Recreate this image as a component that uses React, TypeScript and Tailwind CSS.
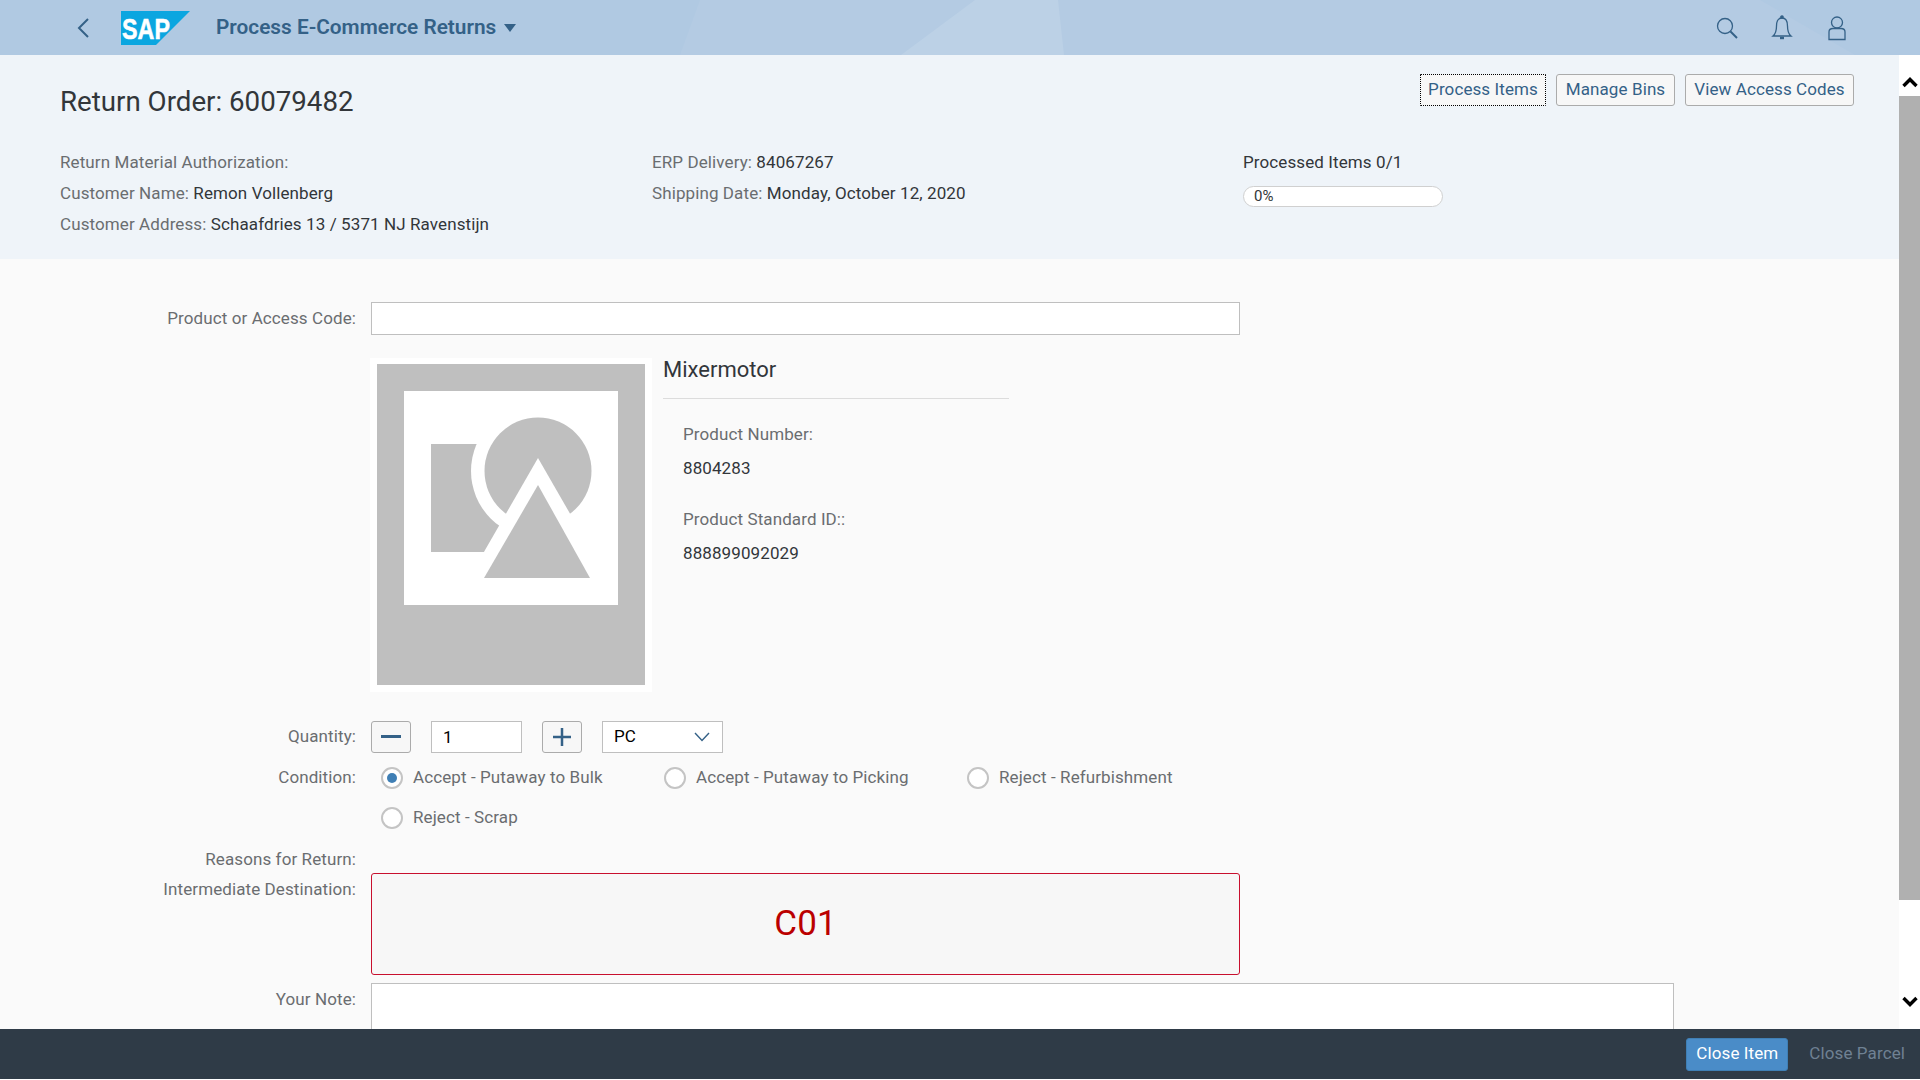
import React from 'react';

const Field = ({ label, value }: { label: string; value?: string }) => (
  <div className="h-[31px] leading-[31px] whitespace-nowrap">
    <span className="text-[#6a6d70]">{label}</span>
    {value && <span className="text-[#32363a]"> {value}</span>}
  </div>
);

const Radio = ({ label, checked, className }: { label: string; checked?: boolean; className: string }) => (
  <div className={`flex items-center h-6 ${className}`}>
    <span className="w-[22px] h-[22px] rounded-full border-2 border-[#c4c4c4] bg-white flex items-center justify-center shrink-0">
      {checked && <span className="w-[10px] h-[10px] rounded-full bg-[#3f7fb5]" />}
    </span>
    <span className="ml-[10px] text-[#6a6d70] whitespace-nowrap">{label}</span>
  </div>
);

const Label = ({ children, className = '' }: { children: React.ReactNode; className?: string }) => (
  <div className={`w-[356px] text-right text-[#6a6d70] whitespace-nowrap shrink-0 ${className}`}>{children}</div>
);

const HeaderButton = ({ children, width, focused }: { children: React.ReactNode; width: string; focused?: boolean }) => (
  <button
    className={`h-[32px] bg-[#f7f7f7] text-[#346187] whitespace-nowrap ${width} ${
      focused ? 'border border-dotted border-black rounded-[1px]' : 'border border-[#ababab] rounded-[3px]'
    }`}
  >
    {children}
  </button>
);

const StepButton = ({ children }: { children: React.ReactNode }) => (
  <button className="w-[40px] h-[32px] bg-[#f7f7f7] border border-[#ababab] rounded-[3px] flex items-center justify-center">
    {children}
  </button>
);

export default function App() {
  return (
    <div
      className="h-[1079px] w-[1920px] flex flex-col overflow-hidden text-[17px] tracking-[0.1px] bg-white"
      style={{ fontFamily: 'Roboto, "Liberation Sans", sans-serif' }}
    >
      {/* shell bar */}
      <header className="relative h-[55px] shrink-0 bg-[#b4cbe3] flex items-center">
        <svg className="absolute inset-0" width="1920" height="55" viewBox="0 0 1920 55">
          <polygon points="0,0 700,0 680,55 0,55" fill="#b0c9e2" />
          <polygon points="975,0 1058,0 1064,55 901,55" fill="#bcd1e6" />
          <polygon points="1760,0 1920,0 1920,55 1855,55" fill="#b0c9e2" />
        </svg>
        <svg className="relative ml-[75px]" width="16" height="24" viewBox="0 0 16 24" fill="none">
          <path d="M13 3 L4 12 L13 21" stroke="#346187" strokeWidth="2" />
        </svg>
        <svg className="relative ml-[30px]" width="69" height="34" viewBox="0 0 69 34">
          <polygon points="0,0 69,0 35,34 0,34" fill="#0ba6e0" />
          <text x="1" y="28" fontSize="30" fontWeight="700" fill="#fff" stroke="#fff" strokeWidth="0.6" textLength="48" lengthAdjust="spacingAndGlyphs" fontFamily="Liberation Sans, sans-serif">
            SAP
          </text>
        </svg>
        <div className="relative ml-[26px] text-[20.8px] font-semibold text-[#346187] whitespace-nowrap tracking-normal">
          Process E-Commerce Returns
        </div>
        <svg className="relative ml-[8px]" width="12" height="8" viewBox="0 0 12 8">
          <polygon points="0,0 12,0 6,8" fill="#346187" />
        </svg>
        <div className="relative ml-auto mr-[71px] flex items-center gap-[31px] text-[#346187]">
          <svg width="24" height="24" viewBox="0 0 24 24" fill="none" stroke="#346187">
            <circle cx="10" cy="10" r="7.5" strokeWidth="1.3" />
            <path d="M15.5 15.5 L22 22" strokeWidth="2" />
          </svg>
          <svg width="24" height="26" viewBox="0 0 24 26" fill="none" stroke="#346187" strokeWidth="1.3">
            <path d="M12 3 C7.5 3 6.5 7 6.5 11 C6.5 16 5.5 19 3 21 H21 C18.5 19 17.5 16 17.5 11 C17.5 7 16.5 3 12 3 Z" />
            <circle cx="12" cy="2" r="1.2" fill="#346187" />
            <path d="M10 23 H14" strokeWidth="2.4" />
          </svg>
          <svg width="24" height="26" viewBox="0 0 24 26" fill="none" stroke="#346187" strokeWidth="1.3">
            <circle cx="12" cy="7.5" r="5.5" />
            <path d="M4 24.5 V17 C4 14.5 6 13.5 8 13.5 H16 C18 13.5 20 14.5 20 17 V24.5 Z" />
          </svg>
        </div>
      </header>

      <div className="flex-1 flex min-h-0">
        <main className="flex-1 min-w-0 overflow-hidden bg-[#fafafa]">
          {/* object header */}
          <section className="h-[204px] bg-[#eff4f9] pl-[60px] pr-[45px]">
            <div className="h-[92px] flex items-start justify-between">
              <h1 className="mt-[31px] text-[27.7px] leading-[32px] tracking-normal text-[#32363a] whitespace-nowrap">Return Order: 60079482</h1>
              <div className="mt-[19px] flex gap-[10px]">
                <HeaderButton focused width="w-[126px]">Process Items</HeaderButton>
                <HeaderButton width="w-[119px]">Manage Bins</HeaderButton>
                <HeaderButton width="w-[169px]">View Access Codes</HeaderButton>
              </div>
            </div>
            <div className="flex">
              <div className="w-[592px]">
                <Field label="Return Material Authorization:" />
                <Field label="Customer Name:" value="Remon Vollenberg" />
                <Field label="Customer Address:" value="Schaafdries 13 / 5371 NJ Ravenstijn" />
              </div>
              <div className="w-[591px]">
                <Field label="ERP Delivery:" value="84067267" />
                <Field label="Shipping Date:" value="Monday, October 12, 2020" />
              </div>
              <div>
                <div className="h-[31px] leading-[31px] text-[#32363a]">Processed Items 0/1</div>
                <div className="mt-[8px] w-[200px] h-[21px] rounded-full bg-white border border-[#d0d0d0] pl-[10px] text-[15px] leading-[19px] text-[#32363a]">
                  0%
                </div>
              </div>
            </div>
          </section>

          {/* form */}
          <section className="pt-[43px]">
            <div className="flex items-center gap-[15px] h-[33px]">
              <Label>Product or Access Code:</Label>
              <div className="w-[869px] h-full bg-white border border-[#bfbfbf]" />
            </div>

            <div className="mt-[23px] ml-[370px] flex">
              <div className="w-[282px] h-[334px] bg-white pl-[7px] pt-[6px] shrink-0">
                <div className="h-[321px] w-[268px] bg-[#bfbfbf] pl-[27px] pt-[27px]">
                  <svg width="214" height="214" viewBox="0 0 214 214">
                    <rect width="214" height="214" fill="#fff" />
                    <rect x="27" y="53" width="100" height="108" fill="#bfbfbf" />
                    <circle cx="134" cy="80" r="67" fill="#fff" />
                    <circle cx="134" cy="80" r="53.5" fill="#bfbfbf" />
                    <polygon points="134,67 50,213 218,213" fill="#fff" />
                    <polygon points="134,94 80,187 186,187" fill="#bfbfbf" />
                  </svg>
                </div>
              </div>
              <div className="ml-[11px] w-[346px]">
                <div className="h-[40px] border-b border-[#dcdcdc] text-[22px] leading-[24px] tracking-normal text-[#32363a] box-content">
                  Mixermotor
                </div>
                <div className="pl-[20px] pt-[21px] leading-[28px]">
                  <div className="text-[#6a6d70]">Product Number:</div>
                  <div className="mt-[6px] text-[#32363a]">8804283</div>
                  <div className="mt-[23px] text-[#6a6d70]">Product Standard ID::</div>
                  <div className="mt-[6px] text-[#32363a]">888899092029</div>
                </div>
              </div>
            </div>

            <div className="mt-[29px] flex items-center gap-[15px] h-[32px]">
              <Label>Quantity:</Label>
              <div className="flex items-center h-full">
                <StepButton>
                  <svg width="20" height="4" viewBox="0 0 20 4"><rect width="20" height="3" fill="#346187" /></svg>
                </StepButton>
                <div className="ml-[20px] w-[91px] h-full bg-white border border-[#bfbfbf] pl-[11px] leading-[30px] text-black">1</div>
                <div className="ml-[20px]">
                  <StepButton>
                    <svg width="20" height="20" viewBox="0 0 20 20"><path d="M10 1 V19 M1 10 H19" stroke="#346187" strokeWidth="2.5" /></svg>
                  </StepButton>
                </div>
                <div className="ml-[20px] w-[121px] h-full bg-white border border-[#bfbfbf] pl-[11px] pr-[12px] flex items-center justify-between text-black">
                  PC
                  <svg width="16" height="10" viewBox="0 0 16 10" fill="none"><path d="M1 1 L8 8.5 L15 1" stroke="#346187" strokeWidth="1.4" /></svg>
                </div>
              </div>
            </div>

            <div className="mt-[13px] flex gap-[15px]">
              <Label className="leading-[22px]">Condition:</Label>
              <div>
                <div className="flex ml-[10px]">
                  <Radio label="Accept - Putaway to Bulk" checked className="w-[283px]" />
                  <Radio label="Accept - Putaway to Picking" className="w-[303px]" />
                  <Radio label="Reject - Refurbishment" className="" />
                </div>
                <Radio label="Reject - Scrap" className="ml-[10px] mt-[16px]" />
              </div>
            </div>

            <div className="mt-[19px] h-[20px] leading-[20px] flex">
              <Label>Reasons for Return:</Label>
            </div>

            <div className="mt-[4px] flex gap-[15px]">
              <Label className="pt-[5px] leading-[22px]">Intermediate Destination:</Label>
              <div className="w-[869px] h-[102px] pt-[1px] bg-[#f7f7f7] border border-[#c8102e] rounded-[3px] flex items-center justify-center text-[35px] text-[#bb0000]">
                C01
              </div>
            </div>

            <div className="mt-[8px] flex gap-[15px]">
              <Label className="pt-[4px] leading-[24px]">Your Note:</Label>
              <div className="w-[1303px] h-[80px] bg-white border border-[#bfbfbf]" />
            </div>
          </section>
        </main>

        {/* scrollbar */}
        <div className="w-[21px] shrink-0 bg-white flex flex-col items-center">
          <div className="h-[41px] shrink-0 flex items-center justify-center pt-[14px]">
            <svg width="16" height="11" viewBox="0 0 16 11" fill="none"><path d="M1.5 9 L8 2.5 L14.5 9" stroke="#000" strokeWidth="3.4" /></svg>
          </div>
          <div className="w-full h-[804px] shrink-0 bg-[#b0b0b0]" />
          <div className="mt-[96px]">
            <svg width="16" height="11" viewBox="0 0 16 11" fill="none"><path d="M1.5 2 L8 8.5 L14.5 2" stroke="#000" strokeWidth="3.4" /></svg>
          </div>
        </div>
      </div>

      {/* footer */}
      <footer className="h-[50px] shrink-0 bg-[#2f3b47] flex items-center justify-end pr-[15px]">
        <button className="w-[102px] h-[33px] rounded-[3px] bg-[#4a8cc8] border border-[#3f7fb5] text-white">Close Item</button>
        <span className="ml-[21px] text-[#6f8193]">Close Parcel</span>
      </footer>
    </div>
  );
}
